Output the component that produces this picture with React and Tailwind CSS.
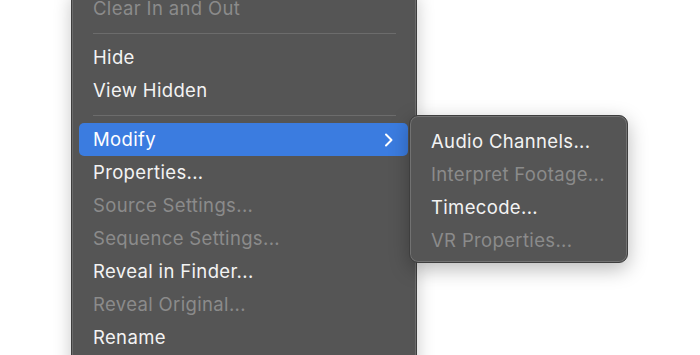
import React from 'react';

const mainItems = [
  { label: 'Clear In and Out', disabled: true },
  { sep: true },
  { label: 'Hide' },
  { label: 'View Hidden' },
  { sep: true },
  { label: 'Modify', active: true, submenu: true },
  { label: 'Properties...' },
  { label: 'Source Settings...', disabled: true },
  { label: 'Sequence Settings...', disabled: true },
  { label: 'Reveal in Finder...' },
  { label: 'Reveal Original...', disabled: true },
  { label: 'Rename' },
];

const subItems = [
  { label: 'Audio Channels...' },
  { label: 'Interpret Footage...', disabled: true },
  { label: 'Timecode...' },
  { label: 'VR Properties...', disabled: true },
];

function Chevron() {
  return (
    <svg className="w-[10px] h-[14px]" viewBox="0 0 10 14" fill="none" stroke="currentColor">
      <path d="M2 1.5l5.5 5.5L2 12.5" strokeWidth={2} strokeLinecap="round" strokeLinejoin="round" />
    </svg>
  );
}

function MenuRow({ item, indent }) {
  if (item.sep) {
    return (
      <div className="h-4 flex items-center pl-[21px] pr-[20px]">
        <div className="h-px w-full bg-[#6c6c6c]" />
      </div>
    );
  }
  return (
    <div
      className={`h-[33px] flex items-center justify-between rounded-[5px] ${indent} ${
        item.active ? 'bg-[#3b7ce0] text-white' : item.disabled ? 'text-[#8b8b8b]' : 'text-[#f3f3f3]'
      }`}
    >
      <span>{item.label}</span>
      {item.submenu && <Chevron />}
    </div>
  );
}

export default function App() {
  return (
    <div
      className="relative w-[700px] h-[355px] overflow-hidden bg-white text-[18.5px] tracking-[0.35px] leading-none"
      style={{ fontFamily: 'Inter, "Noto Sans", sans-serif' }}
    >
      {/* Main context menu */}
      <div className="absolute left-[71px] top-[-9px] w-[346px] h-[420px] bg-[#555555] border border-[#3e3e3e] rounded-[9px] shadow-[0_0_0_1px_#6c6c6c_inset,0_4px_18px_rgba(0,0,0,0.22)]">
        <div className="flex flex-col">
          {mainItems.map((item, i) => (
            <div key={i} className={item.sep ? '' : 'ml-[7px] mr-2'}>
              <MenuRow item={item} indent="pl-[14px] pr-[14px]" />
            </div>
          ))}
        </div>
      </div>

      {/* Submenu */}
      <div className="absolute left-[409px] top-[115px] w-[219px] h-[148px] bg-[#555555] border border-[#3e3e3e] rounded-[9px] pt-[9px] shadow-[0_0_0_1px_#727272_inset,0_6px_20px_rgba(0,0,0,0.28)]">
        <div className="flex flex-col">
          {subItems.map((item, i) => (
            <MenuRow key={i} item={item} indent="pl-[21px] pr-3" />
          ))}
        </div>
      </div>
    </div>
  );
}
